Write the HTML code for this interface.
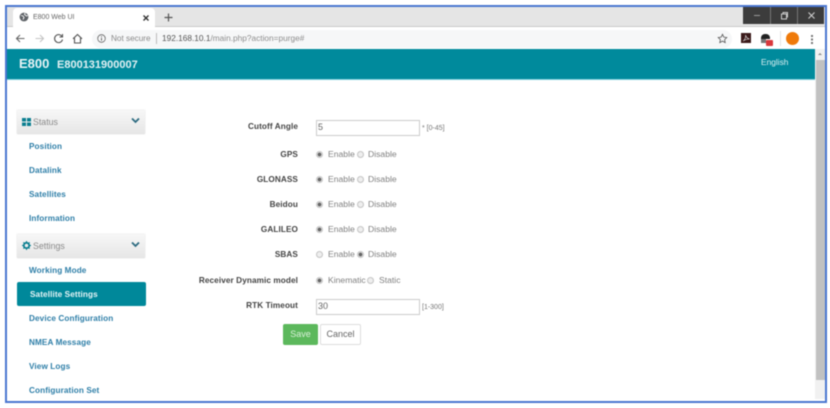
<!DOCTYPE html>
<html>
<head>
<meta charset="utf-8">
<title>E800 Web UI</title>
<style>
html,body{margin:0;padding:0;background:#fff;}
body{width:830px;height:408px;position:relative;overflow:hidden;font-family:"Liberation Sans",sans-serif;}
#w{position:absolute;left:0;top:0;width:830px;height:408px;filter:blur(.45px);}
.a{position:absolute;white-space:nowrap;}
#frame{position:absolute;left:5px;top:5px;width:818px;height:394px;border:2px solid #4a77d0;z-index:20;pointer-events:none;}
.side{font-size:8.2px;font-weight:bold;color:#2f7fa8;left:29px;line-height:12px;letter-spacing:.1px;}
.lbl{font-size:8.2px;font-weight:bold;color:#444;right:532px;line-height:12px;letter-spacing:.1px;}
.opt{font-size:8.6px;color:#808080;line-height:12px;}
.panel{position:absolute;left:17px;width:128px;height:24px;background:linear-gradient(#f7f7f7,#e6e6e6);border:0;box-shadow:0 0 1px #ccc;}
.r{position:absolute;width:7px;height:7px;border-radius:50%;border:1px solid #c4c4c4;background:#eee;box-sizing:border-box;}
.r.on{background:radial-gradient(circle,#666 0,#666 1.7px,#f4f4f4 2.2px);border-color:#c4c4c4;}
.inp{position:absolute;left:316px;width:104px;height:16px;border:1px solid #ccc;box-sizing:border-box;background:#fff;font-size:9px;color:#666;line-height:13px;padding-left:1px;}
.hint{font-size:7px;color:#777;line-height:10px;}
</style>
</head>
<body>
<div id="w">
<div id="frame"></div>

<!-- tab strip -->
<div class="a" style="left:7px;top:7px;width:818px;height:20px;background:#e5e5e5;"></div>
<div class="a" style="left:7px;top:26px;width:818px;height:1px;background:#c9c9c9;"></div>
<div class="a" style="left:13px;top:8px;width:142px;height:20px;background:#fff;border-radius:4px 4px 0 0;"></div>
<svg class="a" style="left:19px;top:12px" width="10" height="10" viewBox="0 0 10 10"><circle cx="5" cy="5" r="4.4" fill="#5f6368"/><path d="M2 3.500l2 .5 1 1.500-1 2M6 1l-.5 1.500L7.500 4 9 3.500" stroke="#fff" stroke-width=".9" fill="none"/></svg>
<div class="a" style="left:33px;top:13px;font-size:7px;line-height:10px;color:#666;">E800 Web UI</div>
<svg class="a" style="left:142px;top:14px" width="8" height="8" viewBox="0 0 8 8"><path d="M1.500 1.500l5 5M6.500 1.500l-5 5" stroke="#333" stroke-width="1.400"/></svg>
<svg class="a" style="left:163px;top:12px" width="11" height="11" viewBox="0 0 11 11"><path d="M5.500 1.500v8M1.500 5.500h8" stroke="#555" stroke-width="1.200"/></svg>

<!-- window controls -->
<div class="a" style="left:743px;top:7px;width:81px;height:17px;background:#3c3c3c;"></div>
<div class="a" style="left:770px;top:7px;width:1px;height:17px;background:#777;"></div>
<div class="a" style="left:797px;top:7px;width:1px;height:17px;background:#777;"></div>
<div class="a" style="left:754px;top:15px;width:6px;height:1px;background:#999;"></div>
<svg class="a" style="left:780px;top:11px" width="9" height="9" viewBox="0 0 9 9"><path d="M1.500 3h5v5h-5zM3 3V1.500h4.500V6H6.500" stroke="#ccc" fill="none"/></svg>
<svg class="a" style="left:807px;top:11px" width="9" height="9" viewBox="0 0 9 9"><path d="M1.500 1.500l6 6M7.500 1.500l-6 6" stroke="#ccc" stroke-width="1.100"/></svg>

<!-- toolbar -->
<div class="a" style="left:7px;top:27px;width:818px;height:22px;background:#fff;"></div>
<div class="a" style="left:92px;top:30px;width:640px;height:18px;background:#f6f7f8;border-radius:9px;"></div>
<svg class="a" style="left:15px;top:33px" width="11" height="11" viewBox="0 0 11 11"><path d="M9.500 5.500h-8M5 2L1.500 5.500 5 9" stroke="#666" stroke-width="1.100" fill="none"/></svg>
<svg class="a" style="left:34px;top:33px" width="11" height="11" viewBox="0 0 11 11"><path d="M1.500 5.500h8M6 2l3.500 3.500L6 9" stroke="#c4c4c4" stroke-width="1.100" fill="none"/></svg>
<svg class="a" style="left:53px;top:33px" width="11" height="11" viewBox="0 0 11 11"><path d="M9 3.500A4 4 0 1 0 9.500 6.500M9.500 1v3h-3" stroke="#555" stroke-width="1.100" fill="none"/></svg>
<svg class="a" style="left:72px;top:33px" width="11" height="11" viewBox="0 0 11 11"><path d="M1 5.800L5.500 1.500 10 5.800M2.500 5v5h6V5" stroke="#555" stroke-width="1.100" fill="none"/></svg>
<svg class="a" style="left:97px;top:34px" width="9" height="9" viewBox="0 0 9 9"><circle cx="4.500" cy="4.500" r="3.800" stroke="#666" fill="none" stroke-width=".8"/><path d="M4.500 4v2.600M4.500 2.300v1" stroke="#666"/></svg>
<div class="a" style="left:111px;top:33px;font-size:8.200px;line-height:11px;color:#8a8a8a;">Not secure</div>
<div class="a" style="left:156px;top:33px;width:1px;height:11px;background:#bbb;"></div>
<div class="a" style="left:162px;top:33px;font-size:8.300px;line-height:11px;color:#8e8e8e;"><span style="color:#555">192.168.10.1</span>/main.php?action=purge#</div>
<svg class="a" style="left:717px;top:33px" width="11" height="11" viewBox="0 0 11 11"><path d="M5.500 1.300l1.300 2.800 3 .4-2.200 2.100.6 3-2.700-1.500-2.700 1.500.6-3L1.200 4.500l3-.4z" stroke="#555" stroke-width=".8" fill="none"/></svg>
<div class="a" style="left:741px;top:33px;width:10px;height:10px;background:#3b1a1a;"></div>
<svg class="a" style="left:741px;top:33px" width="10" height="10" viewBox="0 0 10 10"><path d="M2 8c2-1 3-4 2.500-6 .5 2 2 3.500 4 4-2 0-4 .5-6.500 2z" stroke="#ddd" stroke-width=".6" fill="none"/></svg>
<div class="a" style="left:761px;top:34px;width:9px;height:5px;background:#222;border-radius:4px 4px 0 0;"></div>
<div class="a" style="left:761px;top:39px;width:5px;height:4px;background:#777;"></div>
<div class="a" style="left:766px;top:40px;width:7px;height:6px;background:#d9383c;border-radius:1px;"></div>
<div class="a" style="left:780px;top:31px;width:1px;height:15px;background:#e4e4e4;"></div>
<div class="a" style="left:786px;top:32px;width:13px;height:13px;border-radius:50%;background:#ef7a0a;"></div>
<div class="a" style="left:811px;top:35px;width:2px;height:2px;background:#777;box-shadow:0 3.500px 0 #777,0 7px 0 #777;"></div>

<!-- header -->
<div class="a" style="left:7px;top:49px;width:808px;height:30px;background:#008a9c;"></div>
<div class="a" style="left:7px;top:79px;width:808px;height:1px;background:#7fd0dc;"></div>
<div class="a" style="left:19px;top:56px;font-size:13px;font-weight:bold;color:#e8f4f6;line-height:16px;">E800</div>
<div class="a" style="left:57px;top:58px;font-size:11px;font-weight:bold;color:#e0f0f3;line-height:14px;">E800131900007</div>
<div class="a" style="left:761px;top:56px;font-size:8.400px;color:#d8eef1;line-height:12px;">English</div>

<!-- scrollbar -->
<div class="a" style="left:815px;top:49px;width:10px;height:350px;background:#f1f1f1;"></div>
<div class="a" style="left:816px;top:60px;width:9px;height:320px;background:#c1c1c1;"></div>
<div class="a" style="left:818px;top:53px;width:0;height:0;border-left:2px solid transparent;border-right:2px solid transparent;border-bottom:2px solid #888;"></div>

<!-- sidebar -->
<div class="panel" style="top:110px;"></div>
<svg class="a" style="left:22px;top:118px" width="9" height="8" viewBox="0 0 9 8"><path d="M0 0h4v3.500H0zM5 0h4v3.500H5zM0 4.500h4V8H0zM5 4.500h4V8H5z" fill="#0b7f90"/></svg>
<div class="a" style="left:33px;top:116px;font-size:8.800px;line-height:12px;color:#8a8a8a;">Status</div>
<svg class="a" style="left:131px;top:117px" width="9" height="7" viewBox="0 0 9 7"><path d="M1 1.500l3.500 3.500L8 1.500" stroke="#2d6b80" stroke-width="1.800" fill="none"/></svg>
<div class="a side" style="top:141px;">Position</div>
<div class="a side" style="top:165px;">Datalink</div>
<div class="a side" style="top:189px;">Satellites</div>
<div class="a side" style="top:213px;">Information</div>

<div class="panel" style="top:234px;"></div>
<svg class="a" style="left:22px;top:241px" width="9" height="9" viewBox="0 0 9 9"><circle cx="4.500" cy="4.500" r="2.700" stroke="#0b7f90" stroke-width="1.800" fill="none"/><path d="M4.500 0v9M0 4.500h9M1.300 1.300l6.400 6.400M7.700 1.300L1.300 7.700" stroke="#0b7f90" stroke-width="1" stroke-dasharray="1.600 5.800"/></svg>
<div class="a" style="left:33px;top:240px;font-size:8.800px;line-height:12px;color:#8a8a8a;">Settings</div>
<svg class="a" style="left:131px;top:241px" width="9" height="7" viewBox="0 0 9 7"><path d="M1 1.500l3.500 3.500L8 1.500" stroke="#2d6b80" stroke-width="1.800" fill="none"/></svg>
<div class="a side" style="top:265px;">Working Mode</div>
<div class="a" style="left:17px;top:282px;width:129px;height:24px;background:#00889a;border-radius:2px;"></div>
<div class="a side" style="top:289px;left:30px;color:#e6f4f6;">Satellite Settings</div>
<div class="a side" style="top:313px;">Device Configuration</div>
<div class="a side" style="top:337px;">NMEA Message</div>
<div class="a side" style="top:361px;">View Logs</div>
<div class="a side" style="top:385px;">Configuration Set</div>

<!-- form -->
<div class="a lbl" style="top:121px;">Cutoff Angle</div>
<div class="inp" style="top:120px;">5</div>
<div class="a hint" style="left:422px;top:124px;">* [0-45]</div>

<div class="a lbl" style="top:149px;">GPS</div>
<div class="r on" style="left:316px;top:151px;"></div><div class="a opt" style="left:328px;top:148px;">Enable</div>
<div class="r" style="left:357px;top:151px;"></div><div class="a opt" style="left:368px;top:148px;">Disable</div>

<div class="a lbl" style="top:174px;">GLONASS</div>
<div class="r on" style="left:316px;top:176px;"></div><div class="a opt" style="left:328px;top:173px;">Enable</div>
<div class="r" style="left:357px;top:176px;"></div><div class="a opt" style="left:368px;top:173px;">Disable</div>

<div class="a lbl" style="top:199px;">Beidou</div>
<div class="r on" style="left:316px;top:201px;"></div><div class="a opt" style="left:328px;top:198px;">Enable</div>
<div class="r" style="left:357px;top:201px;"></div><div class="a opt" style="left:368px;top:198px;">Disable</div>

<div class="a lbl" style="top:224px;">GALILEO</div>
<div class="r on" style="left:316px;top:226px;"></div><div class="a opt" style="left:328px;top:223px;">Enable</div>
<div class="r" style="left:357px;top:226px;"></div><div class="a opt" style="left:368px;top:223px;">Disable</div>

<div class="a lbl" style="top:249px;">SBAS</div>
<div class="r" style="left:316px;top:251px;"></div><div class="a opt" style="left:328px;top:248px;">Enable</div>
<div class="r on" style="left:357px;top:251px;"></div><div class="a opt" style="left:368px;top:248px;">Disable</div>

<div class="a lbl" style="top:275px;">Receiver Dynamic model</div>
<div class="r on" style="left:316px;top:277px;"></div><div class="a opt" style="left:328px;top:274px;">Kinematic</div>
<div class="r" style="left:367px;top:277px;"></div><div class="a opt" style="left:379px;top:274px;">Static</div>

<div class="a lbl" style="top:300px;">RTK Timeout</div>
<div class="inp" style="top:299px;">30</div>
<div class="a hint" style="left:422px;top:303px;">[1-300]</div>

<div class="a" style="left:283px;top:324px;width:35px;height:21px;background:#5cb85c;border-radius:2px;color:#d8f0d8;font-size:9px;line-height:21px;text-align:center;">Save</div>
<div class="a" style="left:320px;top:324px;width:41px;height:21px;box-sizing:border-box;background:#fff;border:1px solid #ddd;border-radius:2px;color:#666;font-size:9px;line-height:19px;text-align:center;">Cancel</div>
</div>
</body>
</html>
